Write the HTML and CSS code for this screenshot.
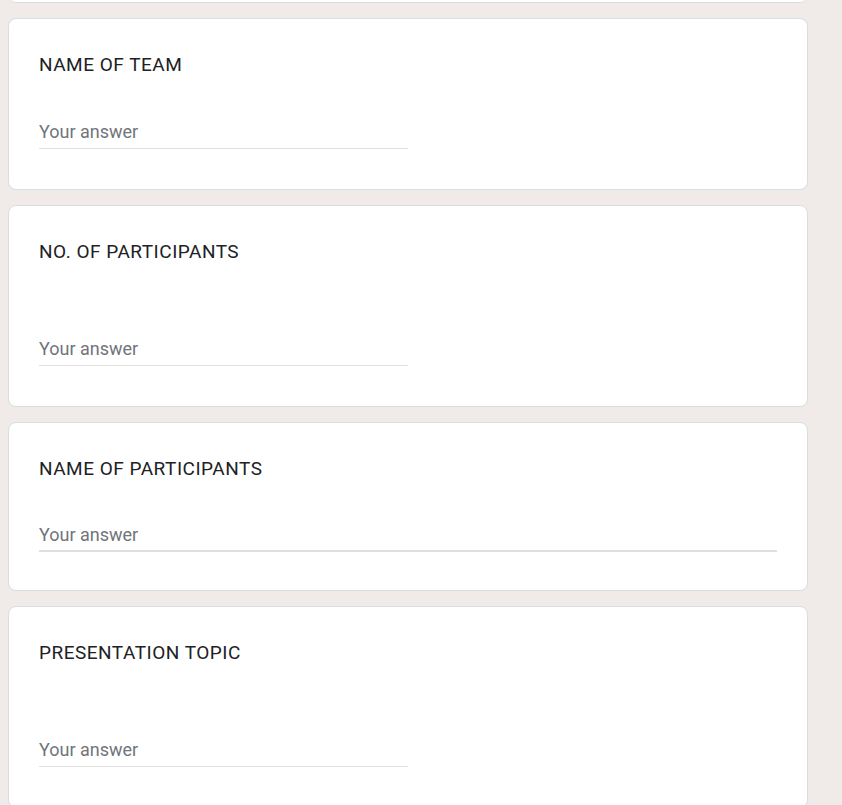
FILE: index.html
```html
<!DOCTYPE html>
<html lang="en">
<head>
<meta charset="utf-8">
<title>Form</title>
<link rel="stylesheet" href="styles.css">
</head>
<body>
<main class="form">
  <div class="card card--prev"></div>

  <section class="card">
    <div class="q-title">NAME OF TEAM</div>
    <div class="answer answer--short">
      <span class="placeholder">Your answer</span>
    </div>
  </section>

  <section class="card">
    <div class="q-title">NO. OF PARTICIPANTS</div>
    <div class="answer answer--short answer--spaced">
      <span class="placeholder">Your answer</span>
    </div>
  </section>

  <section class="card card--long">
    <div class="q-title">NAME OF PARTICIPANTS</div>
    <div class="answer answer--long">
      <span class="placeholder">Your answer</span>
    </div>
  </section>

  <section class="card">
    <div class="q-title">PRESENTATION TOPIC</div>
    <div class="answer answer--short answer--spaced">
      <span class="placeholder">Your answer</span>
    </div>
  </section>
</main>
</body>
</html>
```

FILE: styles.css
```css
* { box-sizing: border-box; }

html, body {
  margin: 0;
  padding: 0;
  background: #f0ebe8;
  overflow: hidden;
}

body {
  font-family: Roboto, "Liberation Sans", Arial, sans-serif;
}

.form {
  display: flex;
  flex-direction: column;
  gap: 15px;
  padding-left: 8px;
  width: 808px;
}

.card {
  width: 800px;
  background: #ffffff;
  border: 1px solid #dadce0;
  border-radius: 8px;
  padding: 34px 30px 40px;
}

.card--prev {
  height: 102px;
  margin-top: -99px;
  padding: 0;
}

.card--long {
  padding-bottom: 38px;
}

.q-title {
  font-size: 19px;
  line-height: 24px;
  letter-spacing: 0.5px;
  color: #202124;
}

.answer {
  margin-top: 42px;
  padding-top: 1px;
  padding-bottom: 4px;
  border-bottom: 1px solid #e0e0e0;
}

.answer--short {
  width: 369px;
}

.answer--spaced {
  margin-top: 72px;
}

.answer--long {
  margin-top: 41px;
  padding-bottom: 3px;
  border-bottom: 2px solid #e0e0e0;
}

.placeholder {
  display: block;
  font-size: 18px;
  line-height: 24px;
  color: #70757a;
}
```
